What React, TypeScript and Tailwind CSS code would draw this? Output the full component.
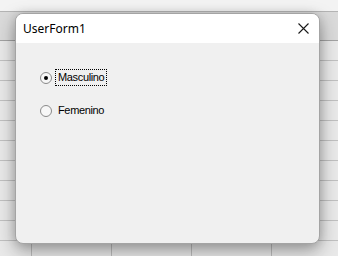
import React, { useState } from 'react';

const ROWS = Array.from({ length: 11 });
const COLS = [32, 80, 80, 80, 80];

const Sheet = () => (
  <div className="flex flex-col w-full h-full">
    <div className="h-[12px] shrink-0 bg-[#f3f3f3] border-b border-[#b4b4b4]" />
    <div className="h-[29px] shrink-0 bg-[#dadada] border-b border-[#a2a2a2]" />
    {ROWS.map((_, r) => (
      <div key={r} className="h-[20px] shrink-0 flex border-b border-[#c0c0c0] bg-[#e9e9e9]">
        {COLS.map((w, c) => (
          <div
            key={c}
            style={{ width: w }}
            className="shrink-0 h-full border-r border-[#bdbdbd]"
          />
        ))}
      </div>
    ))}
  </div>
);

interface RadioProps {
  label: string;
  checked: boolean;
  focused?: boolean;
  onSelect: () => void;
}

const Radio: React.FC<RadioProps> = ({ label, checked, focused, onSelect }) => (
  <label className="flex items-center cursor-default" onClick={onSelect}>
    <span className="w-[12px] h-[12px] rounded-full border border-[#8a8a8a] bg-[#f7f7f7] flex items-center justify-center shrink-0">
      {checked && <span className="w-[4px] h-[4px] rounded-full bg-black" />}
    </span>
    <span
      className={`ml-[3px] h-[17px] px-[2px] flex items-center text-[11px] tracking-[-0.35px] text-black ${
        focused ? 'border border-dotted border-black' : 'border border-transparent'
      }`}
    >
      {label}
    </span>
  </label>
);

export default function App() {
  const [value, setValue] = useState('Masculino');

  return (
    <div className="relative w-[338px] h-[256px] overflow-hidden bg-[#ececec] font-['Liberation_Sans',Arial,sans-serif]">
      <Sheet />

      {/* UserForm window */}
      <div className="absolute left-[15px] top-[13px] w-[305px] h-[231px] rounded-[8px] border border-[#a4a4a4] bg-[#f0f0f0] overflow-hidden flex flex-col shadow-[0_7px_18px_rgba(0,0,0,0.34),0_0_10px_rgba(0,0,0,0.12)]">
        {/* Title bar */}
        <div className="h-[29px] shrink-0 bg-white flex items-center justify-between pl-[7px] pr-[9px]">
          <span className="text-[12px] text-black font-['Segoe_UI','Noto_Sans',sans-serif] leading-none">
            UserForm1
          </span>
          <svg width="11" height="11" viewBox="0 0 11 11" className="mr-[1px]">
            <path d="M0.5 0.5 L10.5 10.5 M10.5 0.5 L0.5 10.5" stroke="#1a1a1a" strokeWidth="1.1" />
          </svg>
        </div>

        {/* Body */}
        <div className="flex-1 flex flex-col gap-[16px] pl-[24px] pt-[26px]">
          <Radio
            label="Masculino"
            checked={value === 'Masculino'}
            focused={value === 'Masculino'}
            onSelect={() => setValue('Masculino')}
          />
          <Radio
            label="Femenino"
            checked={value === 'Femenino'}
            focused={value === 'Femenino'}
            onSelect={() => setValue('Femenino')}
          />
        </div>
      </div>
    </div>
  );
}
